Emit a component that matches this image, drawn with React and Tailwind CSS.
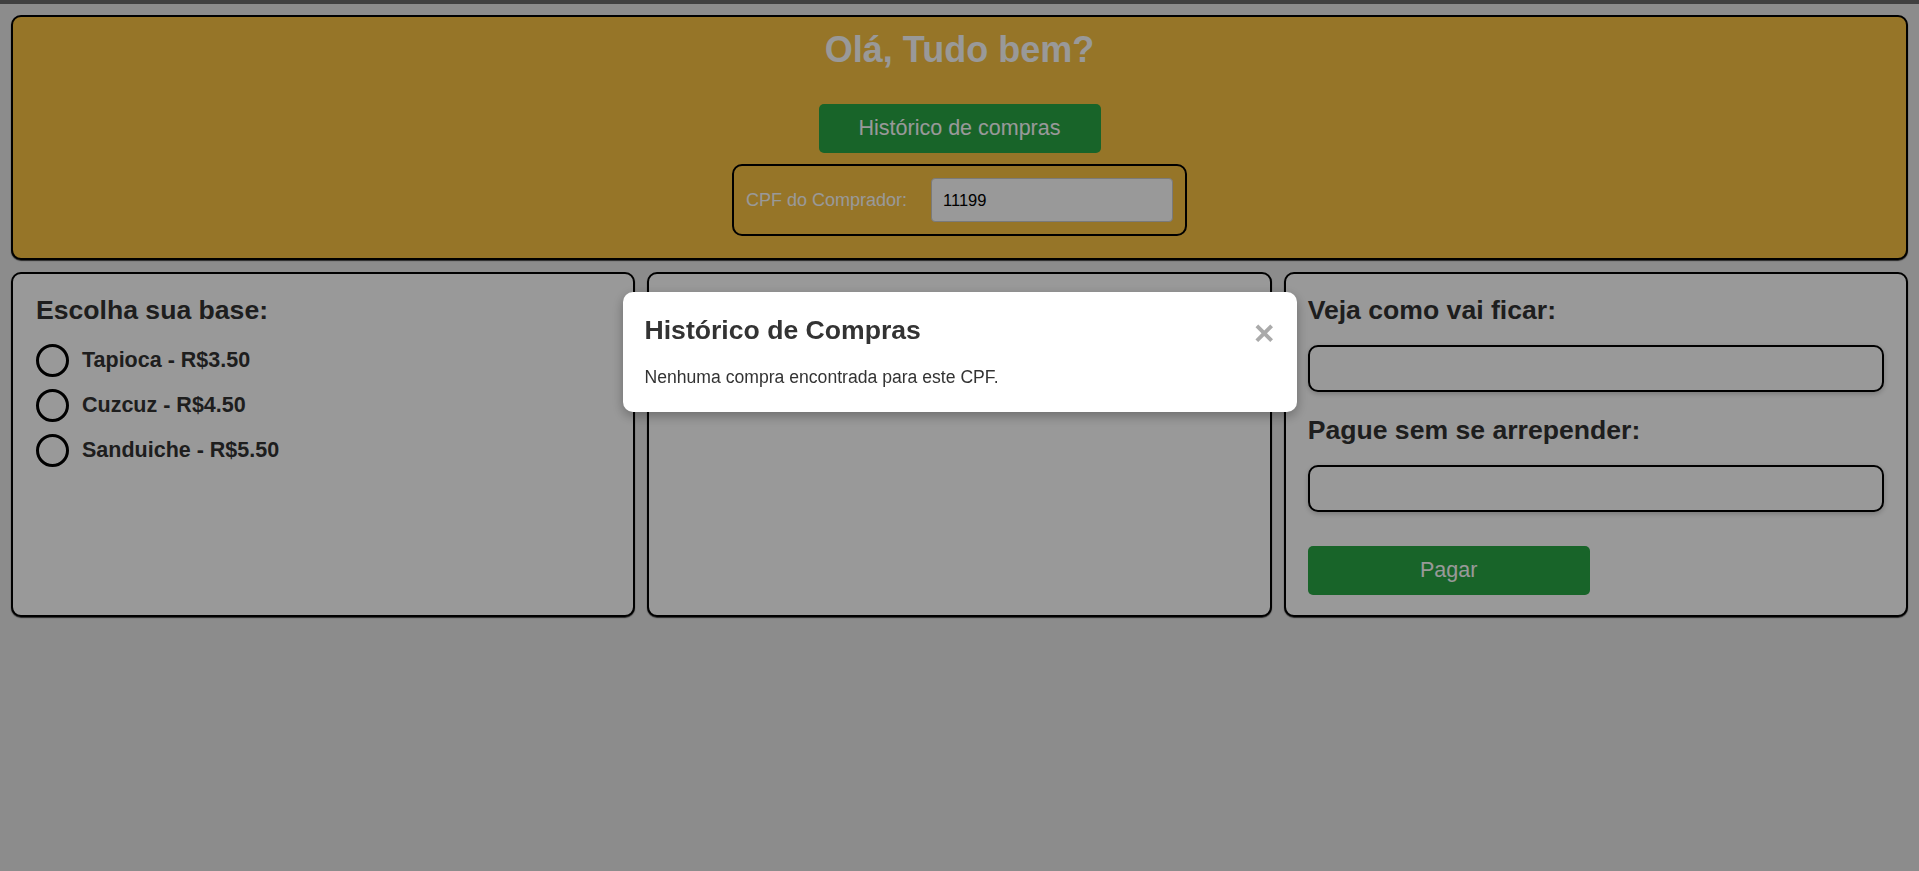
import { useState } from 'react';

const bases = [
    { id: 'tapioca', nome: 'Tapioca', preco: 3.5 },
    { id: 'cuzcuz', nome: 'Cuzcuz', preco: 4.5 },
    { id: 'sanduiche', nome: 'Sanduiche', preco: 5.5 },
];

export default function App() {
    const [cpf, setCpf] = useState('11199');
    const [base, setBase] = useState(null);
    const [modalAberto, setModalAberto] = useState(true);

    return (
        <div className="min-h-screen bg-[#e9e9e9] font-['Liberation_Sans',Arial,sans-serif] text-[#333]">
            <div className="h-[4px] bg-[#6b6b6b]" />

            <div className="px-[11px]">
                {/* Header */}
                <header className="mt-[11px] flex flex-col items-center rounded-[10px] border-2 border-black bg-[#fac344] pt-[13px] pb-[22px] shadow-[0_1px_1px_rgba(0,0,0,0.7)]">
                    <h1 className="text-[36px] leading-[40px] font-bold text-white">Olá, Tudo bem?</h1>
                    <button
                        onClick={() => setModalAberto(true)}
                        className="mt-[34px] h-[49px] w-[282px] rounded-[5px] bg-[#28a745] text-[21.5px] text-white"
                    >
                        Histórico de compras
                    </button>
                    <div className="mt-[11px] flex items-center gap-[24px] rounded-[10px] border-2 border-black p-[12px]">
                        <label className="text-[18px] text-white">CPF do Comprador:</label>
                        <input
                            value={cpf}
                            onChange={(e) => setCpf(e.target.value)}
                            className="h-[44px] w-[242px] rounded-[4px] border border-[#ccc] bg-white px-[11px] text-[16.5px] text-black outline-none"
                        />
                    </div>
                </header>

                {/* Cards */}
                <div className="mt-[12px] grid grid-cols-3 gap-[12px]">
                    <section className="rounded-[10px] border-2 border-black bg-white pr-[22px] pl-[23px] pt-[21px] pb-[20px] shadow-[0_1px_1px_rgba(0,0,0,0.7)]">
                        <h2 className="text-[26.6px] leading-[31px] font-bold">Escolha sua base:</h2>
                        <div className="mt-[18px] flex flex-col gap-[12px]">
                            {bases.map((b) => (
                                <label key={b.id} className="flex h-[33px] items-center gap-[13px] text-[21.5px] font-bold">
                                    <input
                                        type="radio"
                                        name="base"
                                        checked={base === b.id}
                                        onChange={() => setBase(b.id)}
                                        className="m-0 h-[33px] w-[33px] appearance-none rounded-full border-[3px] border-black bg-transparent checked:bg-[#28a745]"
                                    />
                                    {b.nome} - R${b.preco.toFixed(2)}
                                </label>
                            ))}
                        </div>
                    </section>

                    <section className="rounded-[10px] border-2 border-black bg-white shadow-[0_1px_1px_rgba(0,0,0,0.7)]" />

                    <section className="flex flex-col items-start rounded-[10px] border-2 border-black bg-white px-[22px] pt-[21px] pb-[20px] shadow-[0_1px_1px_rgba(0,0,0,0.7)]">
                        <h2 className="text-[26.6px] leading-[31px] font-bold">Veja como vai ficar:</h2>
                        <div className="mt-[19px] h-[47px] w-full rounded-[10px] border-2 border-black bg-white shadow-[0_2px_5px_rgba(0,0,0,0.2)]" />
                        <h2 className="mt-[23px] text-[26.6px] leading-[31px] font-bold">Pague sem se arrepender:</h2>
                        <div className="mt-[19px] h-[47px] w-full rounded-[10px] border-2 border-black bg-white shadow-[0_2px_5px_rgba(0,0,0,0.2)]" />
                        <button className="mt-[34px] h-[49px] w-[282px] rounded-[5px] bg-[#28a745] text-[21.5px] text-white">
                            Pagar
                        </button>
                    </section>
                </div>
            </div>

            {/* Modal */}
            {modalAberto && (
                <div className="fixed inset-0 flex justify-center bg-black/40 pt-[292px]">
                    <div className="h-fit w-[674px] rounded-[10px] bg-white px-[22px] pt-[23px] pb-[25px] shadow-[0_4px_12px_rgba(0,0,0,0.3)]">
                        <div className="flex h-[31px] items-center justify-between">
                            <h2 className="text-[26.6px] leading-[31px] font-bold text-[#333]">Histórico de Compras</h2>
                            <button
                                onClick={() => setModalAberto(false)}
                                className="mt-[3px] text-[35px] leading-none font-bold text-[#aaa]"
                            >
                                ×
                            </button>
                        </div>
                        <p className="mt-[21px] text-[17.6px] leading-[20px] text-[#333]">
                            Nenhuma compra encontrada para este CPF.
                        </p>
                    </div>
                </div>
            )}
        </div>
    );
}
